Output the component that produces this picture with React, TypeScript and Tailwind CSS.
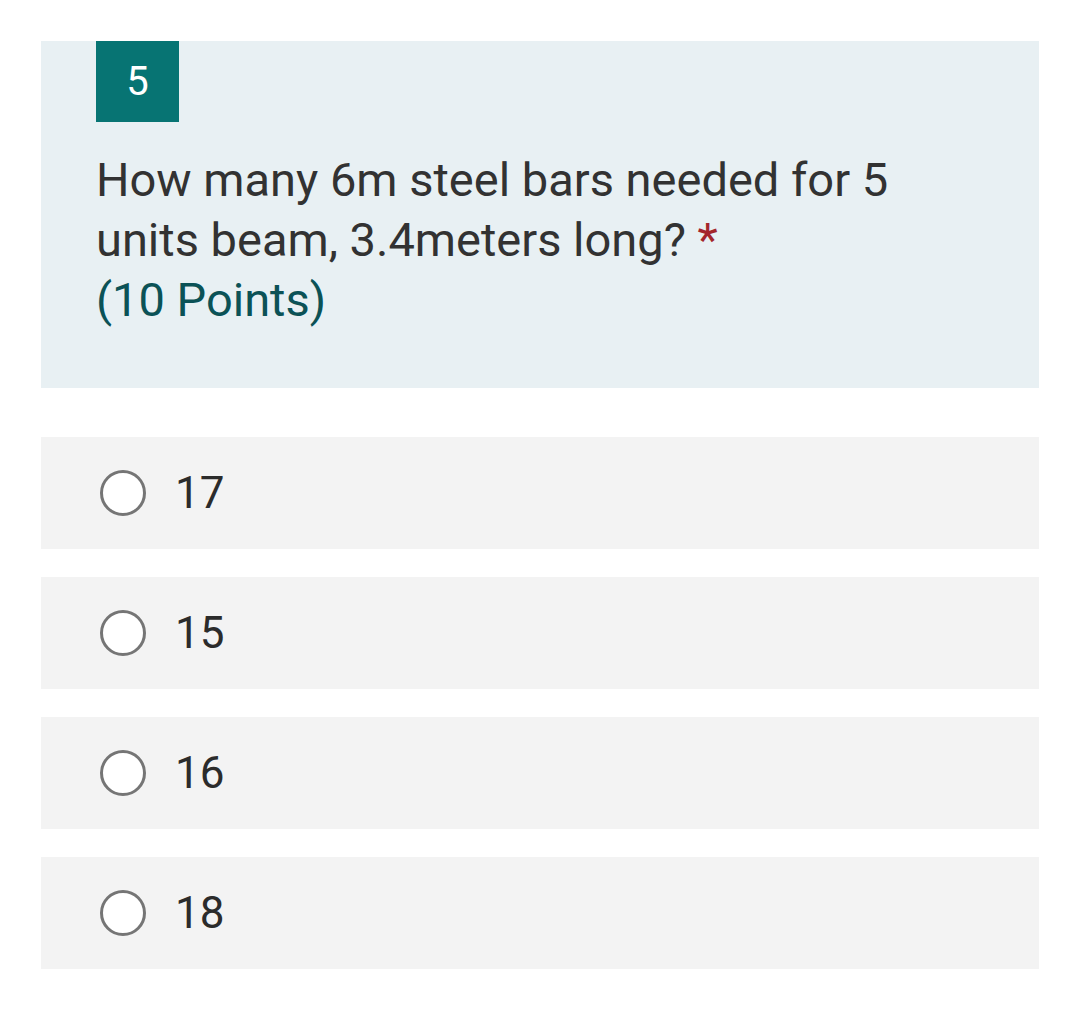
const options = ['17', '15', '16', '18'];

function Radio() {
  return (
    <span className="block w-[46px] h-[46px] rounded-full border-[3px] border-[#757575] bg-white shrink-0" />
  );
}

export default function App() {
  return (
    <div className="min-h-[1033px] bg-white pt-[41px] px-[41px] font-['Roboto',sans-serif]">
      <div className="bg-[#e8f0f3] pl-[55px] pr-8 pb-[58px]">
        <div className="w-[83px] h-[81px] bg-[#077473] text-white text-[40px] flex items-center justify-center">
          5
        </div>
        <div className="mt-[28px] max-w-[840px] text-[47px] leading-[60px] text-[#323232]">
          How many 6m steel bars needed for 5 units beam, 3.4meters long?{' '}
          <span className="text-[#a4262c]">*</span>
          <div className="text-[#0b5256]">(10 Points)</div>
        </div>
      </div>

      <div className="mt-[49px] flex flex-col gap-[28px]">
        {options.map((o) => (
          <div key={o} className="h-[112px] bg-[#f3f3f3] flex items-center pl-[59px] gap-[29px]">
            <Radio />
            <span className="text-[44px] text-[#2b2b2b]">{o}</span>
          </div>
        ))}
      </div>
    </div>
  );
}
